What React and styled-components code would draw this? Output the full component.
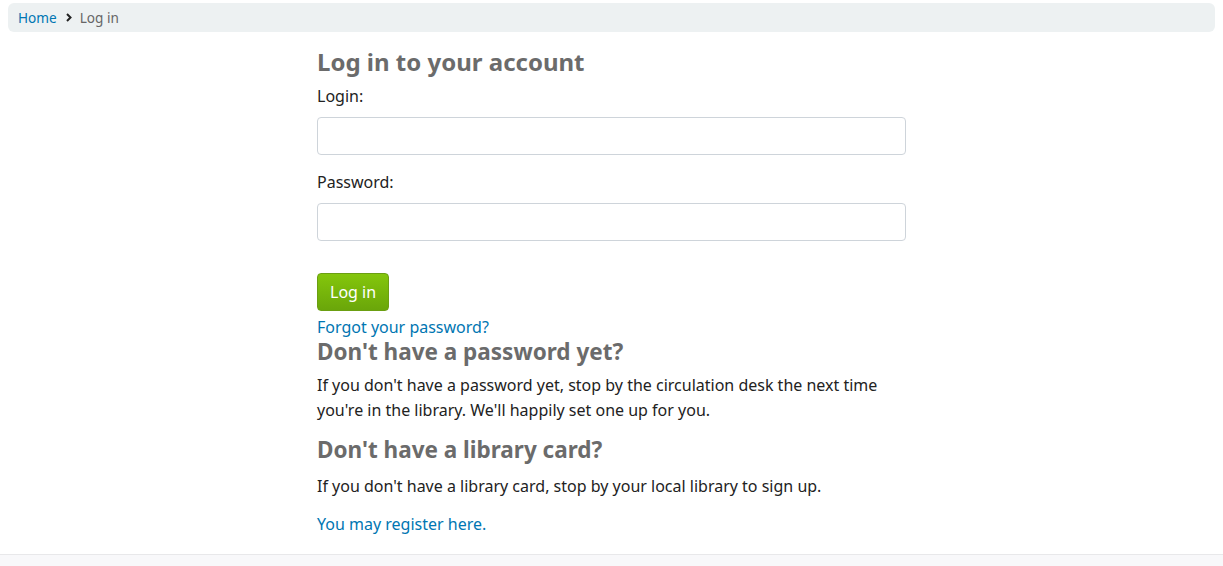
import React from "react";
import styled, { createGlobalStyle } from "styled-components";

const Global = createGlobalStyle`
  html, body { margin: 0; padding: 0; background: #fff; }
  body {
    font-family: "Noto Sans", "Open Sans", sans-serif;
    font-size: 16px;
    color: #222;
  }
  * { box-sizing: border-box; }
`;

const Page = styled.div`
  min-height: 566px;
  display: flex;
  flex-direction: column;
`;

const Breadcrumbs = styled.nav`
  margin: 3px 8px 0;
  height: 29px;
  background: #edf1f2;
  border-radius: 6px;
  display: flex;
  align-items: center;
  padding: 0 10px 1px;
  font-size: 13.6px;
  gap: 7px;
`;

const Crumb = styled.a`
  color: ${(p) => (p.$current ? "#666" : "#0076b2")};
  text-decoration: none;
`;

const Chevron = styled.svg`
  width: 6px;
  height: 9px;
  margin: 0 1px 0 2px;
`;

const Main = styled.main`
  width: 589px;
  margin: 0 auto;
  padding-top: 15px;
  flex: 1;
`;

const Title = styled.h1`
  margin: 0 0 7px;
  font-size: 24px;
  font-weight: bold;
  color: #6b6b6b;
  line-height: 30px;
`;

const SubTitle = styled.h2`
  margin: 0 0 ${(p) => p.$gap || "6px"};
  font-size: 22.5px;
  font-weight: bold;
  color: #6b6b6b;
  line-height: 28px;
  transform: translateY(-1px);
`;

const Label = styled.label`
  display: block;
  font-size: 16px;
  line-height: 24px;
  margin-bottom: 9px;
  color: #222;
`;

const Input = styled.input`
  display: block;
  width: 100%;
  height: 38px;
  border: 1px solid #ced4da;
  border-radius: 4px;
  margin-bottom: 15px;
  font-size: 16px;
  padding: 6px 12px;
  outline: none;
`;

const Button = styled.button`
  margin-top: 17px;
  height: 38px;
  padding: 0 12px;
  background: linear-gradient(#84c60c, #6aa60a);
  border: 1px solid #6b9f12;
  border-radius: 4px;
  color: #fff;
  font-family: inherit;
  font-size: 16px;
  cursor: pointer;
`;

const LinkLine = styled.a`
  display: block;
  color: #0076b2;
  text-decoration: none;
  font-size: 16px;
  line-height: 24px;
  margin: ${(p) => p.$margin || "0"};
`;

const Para = styled.p`
  margin: 0 0 ${(p) => p.$after || "14px"};
  font-size: 16px;
  line-height: 25px;
  color: #222;
`;

const Footer = styled.footer`
  height: 12px;
  background: #f8f8fa;
  border-top: 1px solid #e8e8ea;
`;

export default function App() {
  return (
    <>
      <Global />
      <Page>
        <Breadcrumbs>
          <Crumb href="#">Home</Crumb>
          <Chevron viewBox="0 0 6 9" aria-hidden="true">
            <path d="M1 1 L4.5 4.5 L1 8" fill="none" stroke="#222" strokeWidth="2" />
          </Chevron>
          <Crumb $current>Log in</Crumb>
        </Breadcrumbs>
        <Main>
          <Title>Log in to your account</Title>
          <Label htmlFor="login">Login:</Label>
          <Input id="login" type="text" />
          <Label htmlFor="pw">Password:</Label>
          <Input id="pw" type="password" />
          <Button>Log in</Button>
          <LinkLine href="#" $margin="4px 0 0">Forgot your password?</LinkLine>
          <SubTitle>Don't have a password yet?</SubTitle>
          <Para>
            If you don't have a password yet, stop by the circulation desk the next time
            you're in the library. We'll happily set one up for you.
          </Para>
          <SubTitle $gap="9px">Don't have a library card?</SubTitle>
          <Para $after="13px">If you don't have a library card, stop by your local library to sign up.</Para>
          <LinkLine href="#">You may register here.</LinkLine>
        </Main>
        <Footer />
      </Page>
    </>
  );
}
